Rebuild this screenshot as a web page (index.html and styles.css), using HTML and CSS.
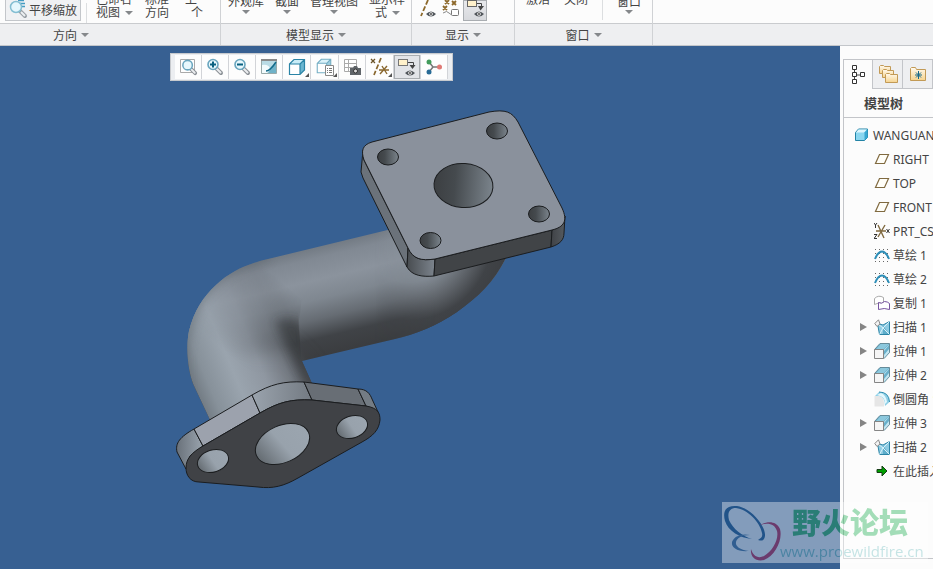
FILE: index.html
```html
<!DOCTYPE html>
<html lang="zh-CN">

<head>
  <meta charset="UTF-8">
  <title>WANGUAN</title>
  <meta name="viewport" content="width=device-width, initial-scale=1">
  <link rel="stylesheet" href="styles.css">
</head>

<body>
  <!-- shared icons -->
  <svg class="sprite" aria-hidden="true">
    <defs>
      <linearGradient id="folderFill" x1="0" y1="0" x2="0" y2="1">
        <stop offset="0" stop-color="#fffaf0"/><stop offset="1" stop-color="#f6d38c"/>
      </linearGradient>
    </defs>
    <symbol id="plane" viewBox="0 0 16 16"><path d="M5.500 3.500h9l-4 9h-9z" fill="#fffef8" stroke="#806a40" stroke-width="1.200"/></symbol>
    <symbol id="sketch" viewBox="0 0 16 16">
      <path d="M1 2.500h15M1 6.500h15M1 10.500h15M1 14.500h15" stroke="#666" stroke-dasharray="1 3"/>
      <path d="M1 12C3 7 5.500 4.500 8 4.500S13 7 15 12" fill="none" stroke="#2e8fb8" stroke-width="2"/>
    </symbol>
    <symbol id="sweep" viewBox="0 0 16 16">
      <path d="M3.500 4.500L9 6l6.500-3.500v13h-10z" fill="#8fcbe2" stroke="#2b84a6"/>
      <path d="M9 6.500l6 8.500H9z" fill="#5fadca"/>
      <path d="M3.500 4.500L9 9l6.500-6.500M9 9l-3.500 6.500M9 9l6.500 6.500" fill="none" stroke="#d9f2fa"/>
      <path d="M.8 4.500L4.500.8 6 5 3 7.500z" fill="#f4f4f4" stroke="#888"/>
    </symbol>
    <symbol id="extrude" viewBox="0 0 16 16">
      <path d="M.5 6.500L6 .5h9.500v9L10 15.500z" fill="#4f9fbf" stroke="#668b99"/>
      <path d="M2 6L6.500 1H15l-5 5z" fill="#8cc8dd"/>
      <path d="M10 15V6.500L15 1.500v8z" fill="#c3e6f1"/>
      <path d="M10 8l5-6v4l-5 6z" fill="#69b0cb"/>
      <path d="M.5 6.500h9v9h-9z" fill="#f5f5f5" stroke="#858585"/>
    </symbol>
    <symbol id="lens" viewBox="0 0 20 20">
      <path d="M11 11l5 5" stroke="#8b9096" stroke-width="4" stroke-linecap="round"/>
      <path d="M12 12l3.500 3.500" stroke="#eceef0" stroke-width="2" stroke-linecap="round"/>
      <circle cx="8" cy="7.500" r="5" fill="#e8f8fd" stroke="#69a5be" stroke-width="1.600"/>
    </symbol>
    <symbol id="cube" viewBox="0 0 20 20">
      <path d="M2.500 7L7 2.500h10.500V13L13 17.500H2.500z" fill="#fff"/>
      <path d="M2.500 7L7 2.500h10.500L13 7z" fill="#c9edf8"/>
      <path d="M13 7l4.500-4.500V13L13 17.500z" fill="#6bb6d0"/>
      <path d="M2.500 7L7 2.500h10.500V13L13 17.500H2.500zH13v10.500M13 7l4.500-4.500" fill="none" stroke="#2b84a6" stroke-width="1.200"/>
    </symbol>
    <symbol id="eye" viewBox="0 0 10 6">
      <path d="M0 3Q5-2 10 3 5 8 0 3z" fill="#50555a"/><circle cx="5" cy="3" r="1.800" fill="#fff"/><circle cx="5" cy="3" r=".9" fill="#333"/>
    </symbol>
  </svg>

  <header class="ribbon">
    <section class="group group-orient">
      <div class="commands">
        <button class="pan"><svg width="20" height="20" viewBox="0 0 20 20">
          <path d="M12 12l5 5" stroke="#999fa5" stroke-width="4" stroke-linecap="round"/><path d="M13 13l4 4" stroke="#edf0f2" stroke-width="2"/>
          <path d="M10 1.500h6M12 4.500h5M13 7.500h4" stroke="#429bc2" stroke-width="1.500"/>
          <circle cx="8" cy="8" r="5.500" fill="#e5f7fd" stroke="#84bed2" stroke-width="1.500"/>
        </svg>平移缩放</button>
        <span class="divider"></span>
        <button class="cmd left">已命名<br>视图<i class="arrow beside"></i></button>
        <button class="cmd">标准<br>方向</button>
        <button class="cmd prev">上一<br>个</button>
      </div>
      <button class="group-name">方向<i class="arrow"></i></button>
    </section>

    <section class="group group-model">
      <div class="commands">
        <button class="cmd menu">外观库<i class="arrow"></i></button>
        <button class="cmd menu">截面<i class="arrow"></i></button>
        <button class="cmd menu">管理视图<i class="arrow"></i></button>
        <button class="cmd left">显示样<br><span class="indent">式</span><i class="arrow beside"></i></button>
      </div>
      <button class="group-name">模型显示<i class="arrow"></i></button>
    </section>

    <section class="group group-show">
      <div class="commands">
        <button class="toggle" aria-label="轴显示"><svg width="24" height="21" viewBox="0 0 24 21">
          <path d="M13 0L6 16" stroke="#8d692b" stroke-width="1.800" stroke-dasharray="5 2"/><use href="#eye" x="11" y="11" width="10" height="6"/>
        </svg></button>
        <button class="toggle" aria-label="点显示"><svg width="24" height="21" viewBox="0 0 24 21">
          <path d="M6 0l4 4m0-4L6 4M13 1l4 4m0-4l-4 4M4 6l4 4m0-4l-4 4" stroke="#8d692b" stroke-width="1.800"/>
          <path d="M4 13q4-3 6 0t4 0" fill="none" stroke="#888"/><rect x="12.500" y="9.500" width="7" height="6" rx="1" fill="#fff" stroke="#777"/>
        </svg></button>
        <button class="toggle pressed" aria-label="注释显示"><svg width="24" height="21" viewBox="0 0 24 21">
          <rect x="4.500" y=".5" width="9" height="6" fill="#fff1cb" stroke="#666"/><path d="M14 3.500h4.500v4" fill="none" stroke="#444"/><path d="M15 6h6l-3.500 4.500z" fill="#444"/>
          <use href="#eye" x="11" y="11" width="10" height="6"/>
        </svg></button>
      </div>
      <button class="group-name">显示<i class="arrow"></i></button>
    </section>

    <section class="group group-window">
      <div class="commands">
        <button class="cmd">激活</button>
        <button class="cmd">关闭</button>
        <span class="divider"></span>
        <button class="cmd menu">窗口<i class="arrow"></i></button>
      </div>
      <button class="group-name">窗口<i class="arrow"></i></button>
    </section>

    <section class="group group-rest">
      <div class="commands"></div>
      <div class="group-name"></div>
    </section>
  </header>

  <main class="workspace">
    <div class="viewport">
      <svg class="model" viewBox="0 46 840 523" preserveAspectRatio="xMidYMid slice" role="img" aria-label="WANGUAN">
        <defs>
          <linearGradient id="pipeMain" gradientUnits="userSpaceOnUse" x1="330" y1="244" x2="355" y2="347">
            <stop offset="0" stop-color="#737b84"/><stop offset=".1" stop-color="#818993"/>
            <stop offset=".3" stop-color="#8b939d"/><stop offset=".48" stop-color="#7f8790"/>
            <stop offset=".66" stop-color="#666c73"/><stop offset=".84" stop-color="#404347"/>
            <stop offset="1" stop-color="#3b3d40"/>
          </linearGradient>
          <linearGradient id="pipeDown" gradientUnits="userSpaceOnUse" x1="193" y1="382" x2="298" y2="338">
            <stop offset="0" stop-color="#737c84"/><stop offset=".12" stop-color="#87919a"/>
            <stop offset=".36" stop-color="#9aa4ae"/><stop offset=".6" stop-color="#8f97a1"/>
            <stop offset=".8" stop-color="#747a82"/><stop offset="1" stop-color="#45484c"/>
          </linearGradient>
          <linearGradient id="downFade" gradientUnits="userSpaceOnUse" x1="226" y1="352" x2="284" y2="284">
            <stop offset="0" stop-color="#fff"/><stop offset="1" stop-color="#000"/>
          </linearGradient>
          <mask id="downMask" maskUnits="userSpaceOnUse" x="170" y="240" width="240" height="200">
            <path d="M170 240H310L299 320 302 361 320 400V440H170z" fill="url(#downFade)"/>
            <path d="M170 450V390L240 360 284 346 300 362 330 400V450z" fill="#fff" filter="url(#soft)"/>
          </mask>
          <radialGradient id="pipeBend" gradientUnits="userSpaceOnUse" cx="408" cy="236" r="108">
            <stop offset="0" stop-color="#8b939d"/><stop offset=".43" stop-color="#838b94"/>
            <stop offset=".62" stop-color="#5f646a"/><stop offset=".78" stop-color="#404347"/><stop offset="1" stop-color="#3b3d40"/>
          </radialGradient>
          <linearGradient id="bendFade" x1="0" x2="1">
            <stop offset="0" stop-color="#000"/><stop offset=".4" stop-color="#fff"/>
          </linearGradient>
          <mask id="bendMask" maskUnits="userSpaceOnUse" x="375" y="220" width="150" height="130">
            <rect x="375" y="220" width="150" height="130" fill="url(#bendFade)"/>
          </mask>
          <linearGradient id="bore"><stop offset="0" stop-color="#3c3f42"/><stop offset=".35" stop-color="#454a4e"/><stop offset="1" stop-color="#7b848c"/></linearGradient>
          <linearGradient id="boreLight" x1="0" y1=".6" x2="1" y2=".4"><stop offset="0" stop-color="#646b71"/><stop offset=".5" stop-color="#98a2ac"/><stop offset="1" stop-color="#9ba5af"/></linearGradient>
          <linearGradient id="cornerFront"><stop offset="0" stop-color="#484c50"/><stop offset="1" stop-color="#7c848d"/></linearGradient>
          <linearGradient id="cornerRight"><stop offset="0" stop-color="#3f4246"/><stop offset="1" stop-color="#565b60"/></linearGradient>
          <linearGradient id="lowerCrest"><stop offset="0" stop-color="#9aa3ad"/><stop offset="1" stop-color="#737a82"/></linearGradient>
          <linearGradient id="lowerEnd"><stop offset="0" stop-color="#69717a"/><stop offset="1" stop-color="#9aa4ae"/></linearGradient>
          <filter id="soft" x="-50%" y="-50%" width="200%" height="200%"><feGaussianBlur stdDeviation="10"/></filter>
          <filter id="softer" x="-50%" y="-50%" width="200%" height="200%"><feGaussianBlur stdDeviation="5"/></filter>
          <clipPath id="pipeClip"><path d="M211 422L195 388C187 372 186 345 189 331C194 311 203 297 216 285C231 271 247 264 268 259L400 227 510 240 506 258C494 282 478 297 457 312C436 326 416 334 395 339L302 361 314 388V420z"/></clipPath>
          <clipPath id="creaseClip"><path d="M240 280H296L299 330 302 361 330 420H240z"/></clipPath>
        </defs>

        <!-- pipe -->
        <g clip-path="url(#pipeClip)">
          <rect x="180" y="220" width="335" height="210" fill="url(#pipeMain)"/>
          <rect x="170" y="240" width="240" height="200" fill="url(#pipeDown)" mask="url(#downMask)"/>
          <path d="M184 390C178 345 190 300 216 280S248 261 268 256" fill="none" stroke="#5f6870" stroke-width="9" opacity=".55" filter="url(#softer)"/>
          <g clip-path="url(#creaseClip)">
            <path d="M276 322Q288 316 302 324L306 362 318 394 306 384 289 348z" fill="#36383b" opacity=".6" filter="url(#softer)"/>
          </g>
          <rect x="375" y="220" width="150" height="130" fill="url(#pipeBend)" mask="url(#bendMask)"/>
        </g>

        <!-- square flange -->
        <g stroke="#1b1d1f" stroke-width="1" stroke-linejoin="round">
          <path d="M363 150L361 172 363 178 407 267 408 248 364 160z" fill="#6b727a"/>
          <path d="M408 248L407 267C412 276 423 277 434 276L435 259C421 261 413 259 408 248z" fill="url(#cornerFront)"/>
          <path d="M435 259L552 230 551 247 434 276z" fill="#414447"/>
          <path d="M552 230L551 247C560 244 564 240 564 233L565 216C564 224 561 227 552 230z" fill="url(#cornerRight)"/>
          <path d="M372 142L489 112C506 109 512 112 518 122L562 208C568 221 564 227 552 230L435 259C421 261 413 259 408 248L364 160C361 151 362 145 372 142z" fill="#8a919c"/>
          <g fill="url(#bore)">
            <ellipse cx="388" cy="157" rx="10.500" ry="8"/>
            <ellipse cx="497" cy="131" rx="10.500" ry="8"/>
            <ellipse cx="539" cy="214" rx="10.500" ry="8"/>
            <ellipse cx="430.500" cy="240.500" rx="10.500" ry="8"/>
            <ellipse cx="463.500" cy="185.500" rx="29.500" ry="22" transform="rotate(4 463 185)"/>
          </g>
        </g>

        <!-- oval flange -->
        <g stroke="#1b1d1f" stroke-width="1" stroke-linejoin="round">
          <path d="M194 429C180 437 175 443 177 452L186 469 190 456 203 446z" fill="url(#lowerEnd)"/>
          <path d="M194 429L252 395 260 413 203 446z" fill="#9ca2ad"/>
          <path d="M252 395C271 384 284 381 304 382L312 400C291 399 279 402 260 413z" fill="url(#lowerCrest)"/>
          <path d="M304 382L358 389 366 406 312 400z" fill="#686e75"/>
          <path d="M358 389C367 389 370 394 372 399L378 412 366 406z" fill="#747c84"/>
          <path d="M203 446L260 413C279 402 291 399 312 400L366 406C378 408 380 413 380 420C379 430 373 436 362 442L298 478C284 486 273 489 258 487L199 482C190 482 186 475 186 468C186 459 191 453 203 446z" fill="#404246"/>
          <g fill="url(#boreLight)">
            <ellipse cx="213" cy="461" rx="16" ry="11" transform="rotate(-18 213 461)"/>
            <ellipse cx="282.500" cy="444" rx="28.500" ry="18.500" transform="rotate(-24 282.500 444)"/>
            <ellipse cx="352" cy="427" rx="16" ry="11" transform="rotate(-18 352 427)"/>
          </g>
        </g>
      </svg>

      <div class="view-tools" role="toolbar" aria-label="视图">
        <button aria-label="重新调整"><svg width="20" height="20" viewBox="0 0 20 20"><path d="M2.500 2.500h14v13h-14z" fill="#fff" stroke="#aaa"/><use href="#lens" x="2" y="1" width="19" height="19"/></svg></button>
        <button aria-label="放大"><svg width="20" height="20" viewBox="0 0 20 20"><use href="#lens" width="20" height="20"/><path d="M5 7.500h6M8 4.500v6" stroke="#086080" stroke-width="2"/></svg></button>
        <button aria-label="缩小"><svg width="20" height="20" viewBox="0 0 20 20"><use href="#lens" width="20" height="20"/><path d="M5 7.500h6" stroke="#086080" stroke-width="2"/></svg></button>
        <button aria-label="重画"><svg width="20" height="20" viewBox="0 0 20 20"><path d="M2.500 2.500h15v14h-15z" fill="#b9dbe5" stroke="#9aa"/><path d="M2 3h16" stroke="#888" stroke-width="2"/><path d="M9 16l8-11v11z" fill="#6fb2c8"/><path d="M3 8q7-1 8 4l-3 4H3z" fill="#f2fbfd"/><path d="M7 14q4 0 10-9" fill="none" stroke="#126b8b" stroke-width="1.500"/></svg></button>
        <button class="more" aria-label="显示样式"><svg width="20" height="20" viewBox="0 0 20 20"><use href="#cube" width="20" height="20"/></svg></button>
        <button class="more" aria-label="已保存方向"><svg width="20" height="20" viewBox="0 0 20 20"><g opacity=".65"><use href="#cube" width="18" height="18"/></g><path d="M10.500 8.500h8v10h-8z" fill="#fff" stroke="#888"/><path d="M12 11.500h1m1 0h3m-5 2h1m1 0h3m-5 2h1m1 0h3" stroke="#777"/></svg></button>
        <button aria-label="视图管理器"><svg width="20" height="20" viewBox="0 0 20 20"><path d="M2.500 2.500h12v12h-12zM2 6.500h13M2 10.500h13M6.500 3v11" fill="#fff" stroke="#aaa"/><path d="M8 11h3l1-2h3l1 2h3v7H8z" fill="#606569"/><circle cx="13.500" cy="14" r="2" fill="#ddd" stroke="#333"/></svg></button>
        <button class="more" aria-label="基准显示过滤器"><svg width="20" height="20" viewBox="0 0 20 20"><path d="M1 2l4 4m0-4L1 6" stroke="#6b5328" stroke-width="1.300"/><path d="M11 1L4 18" stroke="#89672e" stroke-width="1.700" stroke-dasharray="5 2"/><path d="M9 13h10M12 9l5 8m0-8l-7 8" stroke="#89672e" stroke-width="1.400"/></svg></button>
        <button class="pressed" aria-label="注释显示"><svg width="20" height="20" viewBox="0 0 20 20"><rect x="1.500" y="2.500" width="9" height="6" fill="#fff1cb" stroke="#777"/><path d="M11 5.500h5.500v4" fill="none" stroke="#444"/><path d="M12.500 8h6l-3 4z" fill="#444"/><use href="#eye" x="8" y="13" width="10" height="6"/></svg></button>
        <button aria-label="旋转中心"><svg width="20" height="20" viewBox="0 0 20 20"><path d="M5 5l4 5h7M9 10l-4 5" fill="none" stroke="#777" stroke-width="1.500"/><circle cx="5" cy="5" r="2.500" fill="#429b5b"/><circle cx="15.500" cy="10" r="2.500" fill="#e07975"/><circle cx="5" cy="15" r="2.500" fill="#286b96"/></svg></button>
      </div>
    </div>

    <aside class="navigator">
      <div class="panel">
        <div class="tabs" role="tablist">
          <button class="tab active" role="tab" aria-selected="true" aria-label="模型树"><svg width="14" height="20" viewBox="0 0 14 20"><path d="M3.500 4v12M5 10h5" stroke="#444"/><path d="M1.500.5h4v4h-4zM1.500 7.500h4v4h-4zM1.500 14.500h4v4h-4zM9.500 7.500h4v4h-4z" fill="#fff" stroke="#333"/></svg></button>
          <button class="tab" role="tab" aria-label="文件夹浏览器"><svg width="20" height="20" viewBox="0 0 20 20"><g fill="url(#folderFill)" stroke="#c29a56"><path d="M1.500 9.500v-7l1-1h3l1 1h6v7z"/><path d="M4.500 13.500v-7l1-1h3l1 1h6v7z"/><path d="M7.500 18.500v-8l1-1h3l1 1h7v8z"/></g></svg></button>
          <button class="tab" role="tab" aria-label="收藏夹"><svg width="20" height="20" viewBox="0 0 20 20"><path d="M2.500 16.500V4.500l1-1h4l1 2h9v11z" fill="url(#folderFill)" stroke="#c29a56"/><path d="M10.500 7v8M7 11h7M8 8.500l5 5m0-5l-5 5" stroke="#17698b"/></svg></button>
        </div>
        <h2>模型树</h2>
        <ul class="tree">
          <li class="root"><svg width="16" height="16" viewBox="0 0 16 16"><path d="M1.500 5.500L4.500 2h9v8.500l-3 3h-9z" fill="#8bd7f0" stroke="#2383a5"/><path d="M2 5.500L4.500 2.500H13L10 5.500z" fill="#ddf6fd"/><path d="M10.500 5.500L13.500 2v8.500l-3 3z" fill="#38a8d2"/></svg>WANGUAN</li>
          <li><svg width="16" height="16"><use href="#plane"/></svg>RIGHT</li>
          <li><svg width="16" height="16"><use href="#plane"/></svg>TOP</li>
          <li><svg width="16" height="16"><use href="#plane"/></svg>FRONT</li>
          <li><svg width="16" height="16" viewBox="0 0 16 16"><path d="M2 8h10M4 2l6 13M11 2L4 14" stroke="#806a40" stroke-width="1.400"/><path d="M0 0l1.500 2L3 0M1.500 2v3M0 11.500h3l-3 4h3M12.500 6l3 4m0-4l-3 4" fill="none" stroke="#333"/></svg>PRT_CSYS_DEF</li>
          <li><svg width="16" height="16"><use href="#sketch"/></svg>草绘 1</li>
          <li><svg width="16" height="16"><use href="#sketch"/></svg>草绘 2</li>
          <li><svg width="16" height="16" viewBox="0 0 16 16"><path d="M.5 9.500v-6q4-4 9-1v6q-4-2-9 1z" fill="#fff" stroke="#aaa"/><path d="M4.500 14.500v-7q3 2 6-1 3 0 5 2v6q-5-2-11 0z" fill="#fff" stroke="#7754a0"/></svg>复制 1</li>
          <li class="branch"><svg width="16" height="16"><use href="#sweep"/></svg>扫描 1</li>
          <li class="branch"><svg width="16" height="16"><use href="#extrude"/></svg>拉伸 1</li>
          <li class="branch"><svg width="16" height="16"><use href="#extrude"/></svg>拉伸 2</li>
          <li><svg width="16" height="16" viewBox="0 0 16 16"><path d="M.5 5H5q5 1 5 7v3.500H.5z" fill="#e6e6e6"/><path d="M1 5l4-4q10 0 10.500 10L11 15Q11 6 5 5z" fill="#8fcfe6"/><path d="M5 1q10 0 10.500 10" fill="none" stroke="#2d8daf"/><path d="M3 4l4-2q5 2 6 9l-2 2Q11 6 6 5z" fill="#e3f8fd"/></svg>倒圆角 1</li>
          <li class="branch"><svg width="16" height="16"><use href="#extrude"/></svg>拉伸 3</li>
          <li class="branch"><svg width="16" height="16"><use href="#sweep"/></svg>扫描 2</li>
          <li><svg width="16" height="16" viewBox="0 0 16 16"><path d="M3 6.500h5V3l5 5-5 5V9.500H3z" fill="#00a000" stroke="#163d16"/></svg>在此插入</li>
        </ul>
      </div>
    </aside>

    <div class="watermark">
      <svg width="60" height="60" viewBox="0 0 60 60">
        <!-- each ring swells on one side, so it is filled between two outlines -->
        <g fill-rule="evenodd">
          <path d="M3 19C0 8 5 3 15 4 29 6 44 24 43 34 42 39 40 39 36 38 39 36 41 35 40 31 38 20 25 7 14 6 8 6 5 10 7 18 11 27 20 34 30 37 18 36 6 29 3 19z" fill="#00407c"/>
          <path d="M28 33C20 31 12 34 10 40 9 46 16 50 27 49 18 48 13 44 14 40 15 36 20 33 28 33z" fill="#285d91"/>
          <path d="M38 23C46 19 54 19 58 27 61 38 53 54 42 58 34 60 28 55 29 47 31 54 36 57 42 54 51 49 57 37 55 29 53 22 46 20 38 23z" fill="#c00032"/>
        </g>
      </svg>
      <div class="watermark-text"><strong>野火论坛</strong><span>www.proewildfire.cn</span></div>
    </div>
  </main>
</body>

</html>
```
FILE: styles.css
```css
* {
  box-sizing: border-box;
}

body {
  margin: 0;
  height: 100vh;
  overflow: hidden;
  display: flex;
  flex-direction: column;
  font-family: "Noto Sans", "Noto Sans CJK SC", sans-serif;
  font-size: 12px;
  color: #444;
  background: #fcfcfc;
}

button {
  margin: 0;
  padding: 0;
  border: 0;
  background: none;
  color: inherit;
  font-family: "Noto Sans CJK SC", sans-serif;
  font-size: 12px;
  line-height: 13px;
  white-space: nowrap;
}

svg {
  display: block;
  flex: none;
}

.sprite {
  position: absolute;
  width: 0;
  height: 0;
}

/* ribbon */
.ribbon {
  display: flex;
  flex: none;
  border-bottom: 1px solid #c3c6ca;
}

.group {
  flex: none;
  border-right: 1px solid #d0d2d5;
}

.group-orient {
  width: 221px;
}

.group-model {
  width: 191px;
}

.group-show {
  width: 103px;
}

.group-window {
  width: 138px;
}

.group-rest {
  flex: 1;
  border-right: 0;
}

.commands {
  display: flex;
  align-items: flex-end;
  height: 23px;
  overflow: hidden;
}

.group-orient .commands {
  gap: 12px;
  padding-left: 5px;
}

.group-orient .divider {
  margin: 0 -3px 0 -7px;
}

.group-model .commands {
  gap: 11px;
  padding-left: 7px;
}

.group-show .commands {
  padding-left: 3px;
}

.group-window .commands {
  gap: 14px;
  padding-left: 11px;
}

.group-name {
  display: flex;
  align-items: center;
  justify-content: center;
  gap: 4px;
  width: 100%;
  height: 22px;
  border-top: 1px solid #c9cbce;
  background: #eeeff1;
}

.group-orient .group-name {
  padding-right: 78px;
}

.arrow {
  width: 0;
  height: 0;
  border: 4px solid transparent;
  border-top-color: #85888b;
  border-bottom: 0;
}

.arrow.beside {
  display: inline-block;
  margin-left: 5px;
  vertical-align: 2px;
}

.indent {
  padding-left: 6px;
}

.cmd {
  padding-bottom: 5px;
}

.cmd.left {
  text-align: left;
}

.cmd.prev {
  min-width: 32px;
}

.cmd.menu {
  display: flex;
  flex-direction: column;
  align-items: center;
  gap: 3px;
  padding-bottom: 9px;
}

.group-window .cmd:not(.menu) {
  padding-bottom: 18px;
}

.pan {
  display: flex;
  align-items: center;
  gap: 1px;
  width: 76px;
  height: 28px;
  margin-bottom: 2px;
  padding: 4px 0 0 2px;
  border: 1px solid #c3c6ca;
  background: #f0f1f3;
}

.divider {
  width: 1px;
  height: 20px;
  margin-bottom: 3px;
  background: #dcdee0;
}

.toggle {
  width: 24px;
  height: 21px;
  margin-bottom: 2px;
}

.pressed {
  background: linear-gradient(#e9eaed, #d6d8dc);
  box-shadow: inset 0 0 0 1px #a9adb1;
}

/* graphics area */
.workspace {
  position: relative;
  display: flex;
  flex: 1;
  min-height: 0;
}

.viewport {
  position: relative;
  flex: 1;
  min-width: 0;
  background: #376092;
}

.model {
  width: 100%;
  height: 100%;
}

.view-tools {
  position: absolute;
  top: 7px;
  left: 170px;
  display: flex;
  height: 28px;
  padding: 1px 4px;
  background: #eceef1;
  border: 1px solid #c7cace;
}

.view-tools button {
  position: relative;
  display: grid;
  place-items: center;
  width: 27px;
  background: #fdfdfd;
  border-right: 1px solid #d2d4d8;
}

.view-tools .more {
  width: 28px;
}

.view-tools .pressed {
  background: #e2e4e8;
}

.more::after {
  content: "";
  position: absolute;
  right: 1px;
  bottom: 2px;
  border: 2px solid #555;
  border-top-color: transparent;
  border-left-color: transparent;
}

/* navigator */
.navigator {
  width: 93px;
  padding: 13px 0 10px 3px;
  overflow: hidden;
  background: #fcfcfc;
}

.panel {
  height: 100%;
  border: 1px solid #c3c5c9;
  border-right: 0;
}

.tabs {
  display: flex;
}

.tab {
  display: grid;
  flex: none;
  place-items: center;
  width: 30px;
  height: 29px;
  border: 1px solid #c3c5c9;
  border-width: 0 1px 1px 0;
  background: #eeeff1;
}

.tab.active {
  width: 29px;
  border-bottom: 0;
  background: #fcfcfc;
}

h2 {
  margin: 0;
  padding-left: 20px;
  height: 29px;
  border-bottom: 1px solid #c3c5c9;
  font-size: 13px;
  line-height: 28px;
}

.tree {
  margin: 0;
  padding: 5px 0 0;
  list-style: none;
}

.tree li {
  display: flex;
  align-items: center;
  gap: 3px;
  height: 24px;
  padding-left: 30px;
  white-space: nowrap;
}

.tree .root {
  padding-left: 10px;
}

.tree .branch {
  padding-left: 16px;
}

.branch::before {
  content: "";
  margin-right: 4px;
  border: 4px solid transparent;
  border-left: 7px solid #858585;
  border-right: 0;
}

.watermark {
  position: absolute;
  right: 5px;
  bottom: 6px;
  display: flex;
  width: 206px;
  height: 61px;
  background: #fff;
  opacity: .38;
}

.watermark-text {
  flex: 1;
}

.watermark strong {
  display: block;
  height: 36px;
  padding-left: 10px;
  color: #16ac4b;
  font-size: 29px;
  font-weight: 900;
  line-height: 42px;
}

.watermark span {
  display: block;
  margin-left: -2px;
  color: #6ebec0;
  font-family: "Open Sans", sans-serif;
  font-size: 15px;
  line-height: 26px;
}
```
